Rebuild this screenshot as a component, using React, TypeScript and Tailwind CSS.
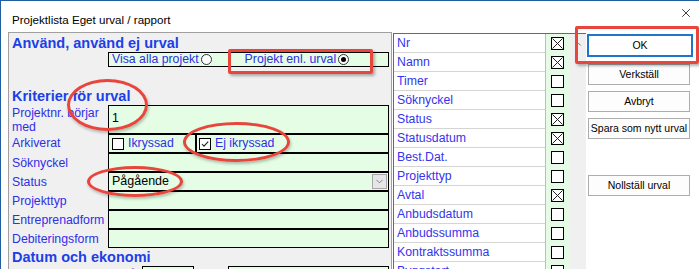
import React from 'react';
import { ChevronDown, ChevronUp, X } from 'lucide-react';

const listRows: [string, boolean][] = [
  ['Nr', true],
  ['Namn', true],
  ['Timer', false],
  ['Söknyckel', false],
  ['Status', true],
  ['Statusdatum', true],
  ['Best.Dat.', false],
  ['Projekttyp', false],
  ['Avtal', true],
  ['Anbudsdatum', false],
  ['Anbudssumma', false],
  ['Kontraktssumma', false],
  ['Byggstart', false],
];

function Radio({ on }: { on?: boolean }) {
  return (
    <span className="ml-[2px] flex h-[11px] w-[11px] items-center justify-center rounded-full border border-[#333] bg-white">
      {on && <span className="h-[5px] w-[5px] rounded-full bg-black" />}
    </span>
  );
}

function Check({ state, size = 13 }: { state: 'x' | 'v' | 'none'; size?: number }) {
  return (
    <span
      className="flex shrink-0 items-center justify-center border border-black bg-white"
      style={{ width: size, height: size }}
    >
      {state === 'x' && (
        <svg width={size - 2} height={size - 2} viewBox="0 0 11 11">
          <path d="M0.5 0.5L10.5 10.5M10.5 0.5L0.5 10.5" stroke="#222" strokeWidth="1" />
        </svg>
      )}
      {state === 'v' && (
        <svg width={size - 2} height={size - 2} viewBox="0 0 10 10">
          <path d="M2 5L4 7.2L8.2 2.6" stroke="#222" strokeWidth="1.1" fill="none" />
        </svg>
      )}
    </span>
  );
}

function Field({ label, h, children }: { label: string; h: string; children?: React.ReactNode }) {
  return (
    <div className={`flex shrink-0 ${h}`}>
      <div className="flex w-[96px] shrink-0 items-center leading-[14px] text-[#2f2fe8]">{label}</div>
      <div className="flex flex-1 items-center border border-black bg-[#e4fde4] pl-[3px] text-black">{children}</div>
    </div>
  );
}

function Header({ children, cls }: { children: React.ReactNode; cls: string }) {
  return (
    <div className={`flex shrink-0 items-center text-[14.5px] font-bold leading-[17px] text-[#1c3fe8] ${cls}`}>{children}</div>
  );
}

function Btn({ children, cls }: { children: React.ReactNode; cls: string }) {
  return (
    <div className={`ml-px flex h-[21px] w-[102px] items-center justify-center border border-[#adadad] bg-[#fdfdfd] text-[10.5px] text-black ${cls}`}>
      {children}
    </div>
  );
}

export default function App() {
  return (
    <div className="relative h-[269px] w-[699px] overflow-hidden border-l border-t border-[#1f5f9f] bg-white font-['Liberation_Sans',Arial,sans-serif] text-[12.3px]">
      {/* title */}
      <div className="flex h-[31px] items-start">
        <div className="ml-[11px] mt-[12px] text-[11.6px] leading-[14px] text-black">Projektlista Eget urval / rapport</div>
        <X className="ml-auto mr-[6px] mt-[5px]" size={14} strokeWidth={1.6} color="#333" />
      </div>

      <div className="flex h-[237px] items-start">
        {/* left panel */}
        <div className="ml-[7px] flex h-full w-[384px] flex-col overflow-hidden border-l border-r border-t border-[#a0a0a0] bg-[#f0f0f0] pl-[3px] pr-[2px]">
          <Header cls="mt-[1px] h-[18px]">Använd, använd ej urval</Header>
          <div className="ml-[96px] flex h-[15px] shrink-0 items-center border border-black bg-[#e4fde4] pl-[3px] text-[#2f2fe8]">
            <span>Visa alla projekt</span>
            <Radio />
            <span className="ml-[33px]">Projekt enl. urval</span>
            <Radio on />
          </div>
          <Header cls="mt-[21px] h-[17px]">Kriterier för urval</Header>
          <Field label="Projektnr. börjar med" h="h-[29px]">
            <span className="self-start pt-[3px]">1</span>
          </Field>
          <div className="flex h-[19px] shrink-0">
            <div className="flex w-[96px] shrink-0 items-center text-[#2f2fe8]">Arkiverat</div>
            <div className="flex w-[88px] items-center gap-[4px] border border-black bg-[#e4fde4] pl-[3px] text-[#2f2fe8]">
              <Check state="none" size={12} />
              <span>Ikryssad</span>
            </div>
            <div className="flex flex-1 items-center gap-[4px] border border-black bg-[#e4fde4] pl-[2px] text-[#2f2fe8]">
              <Check state="v" size={12} />
              <span>Ej ikryssad</span>
            </div>
          </div>
          <Field label="Söknyckel" h="h-[19px]" />
          <Field label="Status" h="h-[19px]">
            <span className="text-[12.5px]">Pågående</span>
            <span className="ml-auto mr-[1px] flex h-[15px] w-[15px] items-center justify-center border border-[#a8a8a8] bg-[#e6e6e6]">
              <ChevronDown size={11} strokeWidth={1.5} color="#555" />
            </span>
          </Field>
          <Field label="Projekttyp" h="h-[19px]" />
          <Field label="Entreprenadform" h="h-[19px]" />
          <Field label="Debiteringsform" h="h-[19px]" />
          <Header cls="h-[18px]">Datum och ekonomi</Header>
          <div className="flex h-[19px] shrink-0 text-[#2f2fe8]">
            <span className="flex w-[130px] shrink-0 items-center whitespace-nowrap">Registreringsdatum från</span>
            <div className="w-[52px] border border-black bg-[#e4fde4]" />
            <span className="flex w-[34px] items-center pl-[5px]">till</span>
            <div className="flex-1 border border-black bg-[#e4fde4]" />
          </div>
        </div>

        {/* column list */}
        <div className="ml-px mt-px flex h-full w-[193px] border-l border-t border-[#6a6a6a] bg-white">
          <div className="flex flex-col">
            {listRows.map(([name, on]) => (
              <div key={name} className="flex h-[19px] shrink-0">
                <div className="flex w-[151px] items-center border-b border-[#d4d4d4] pl-[3px] text-[#3434ee]">{name}</div>
                <div className="flex w-[25px] items-center justify-center border-l border-[#bdbdbd] bg-[#e6fbe6] pr-[2px]">
                  <Check state={on ? 'x' : 'none'} />
                </div>
              </div>
            ))}
          </div>
          <div className="flex w-[16px] flex-col items-center bg-[#f0f0f0] pt-[5px]">
            <ChevronUp size={10} strokeWidth={2} color="#606060" />
          </div>
        </div>

        {/* buttons */}
        <div className="ml-px flex flex-col pt-[2px]">
          <div className="flex h-[23px] w-[106px] items-center justify-center border-2 border-[#1f74cc] bg-white text-[10.5px] text-black">
            OK
          </div>
          <Btn cls="mt-[7px]">Verkställ</Btn>
          <Btn cls="mt-[6px]">Avbryt</Btn>
          <Btn cls="mt-[6px]">Spara som nytt urval</Btn>
          <Btn cls="mt-[36px]">Nollställ urval</Btn>
        </div>
      </div>

      {/* annotations */}
      <div className="absolute left-[227px] top-[48px] h-[25px] w-[145px] rounded-[2px] border-[3px] border-[#e8453c] shadow-[2px_2px_3px_rgba(0,0,0,0.3)]" />
      <div className="absolute left-[574px] top-[25px] h-[38px] w-[124px] rounded-[2px] border-[3px] border-[#e8453c] shadow-[2px_2px_3px_rgba(0,0,0,0.3)]" />
      <div className="absolute left-[66px] top-[78px] h-[52px] w-[81px] rounded-[50%] border-[3px] border-[#e8453c] shadow-[1px_2px_3px_rgba(0,0,0,0.25)]" />
      <div className="absolute left-[182px] top-[121px] h-[40px] w-[107px] rounded-[50%] border-[3px] border-[#e8453c] shadow-[1px_2px_3px_rgba(0,0,0,0.25)]" />
      <div className="absolute left-[86px] top-[165px] h-[31px] w-[96px] rounded-[50%] border-[3px] border-[#e8453c] shadow-[1px_2px_3px_rgba(0,0,0,0.25)]" />
    </div>
  );
}
